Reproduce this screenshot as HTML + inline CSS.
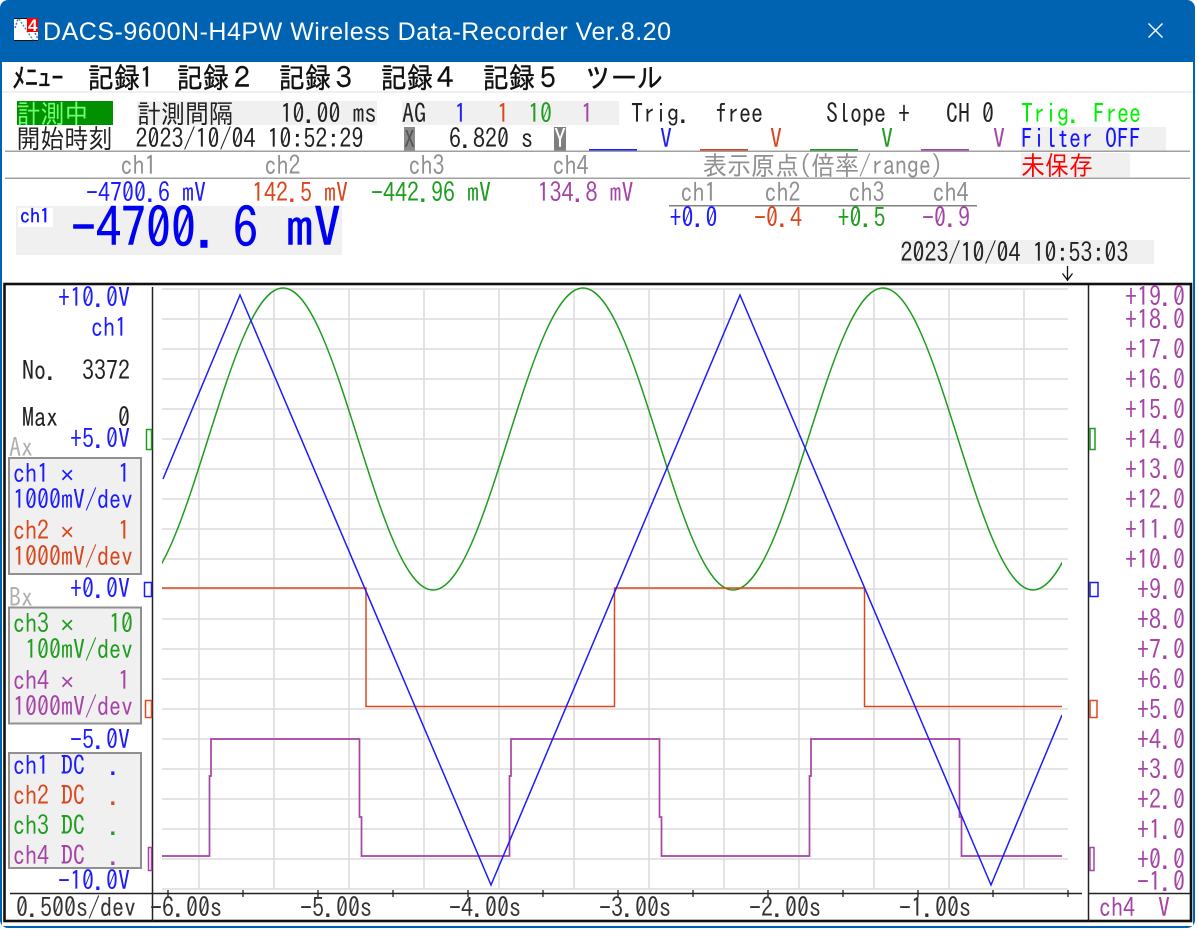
<!DOCTYPE html>
<html><head><meta charset="utf-8"><style>
html,body{margin:0;padding:0;background:#fff;width:1198px;height:930px;overflow:hidden}
svg{display:block}
text{font-family:"IPAGothic","Liberation Mono","Noto Sans CJK JP",monospace;font-size:24px;white-space:pre;fill:#222;transform-box:fill-box;transform-origin:0 100%;transform:translateY(1.5px) scaleY(1.1)}
.b{fill:#1c1cff}.r{fill:#d8481f}.g{fill:#1f9d1f}.p{fill:#a544a5}.h{fill:#909090}.l{fill:#00f000}
.m{font-size:26px;fill:#111;stroke:#111;stroke-width:.35px}
.t{transform:none}
.xx{font-family:"Liberation Mono",monospace;transform:translateY(1px)}
</style></head><body>
<svg width="1198" height="930" viewBox="0 0 1198 930" xmlns="http://www.w3.org/2000/svg">
<defs><clipPath id="c"><rect x="162" y="280" width="900" height="620"/></clipPath></defs>
<!-- window -->
<path d="M8,0H1187a8,8 0 0 1 8,8V920a8,8 0 0 1 -8,8H8a8,8 0 0 1 -8,-8V8a8,8 0 0 1 8,-8z" fill="#0063b1"/>
<rect x="2" y="62" width="1191" height="864" fill="#fff"/>
<!-- icon -->
<rect x="14" y="18" width="24" height="23" fill="#fff"/>
<rect x="14" y="18" width="24" height="1" fill="#111"/>
<rect x="14" y="40" width="24" height="1" fill="#111"/>
<path d="M19,19L33,40" stroke="#40a8a0" stroke-width="1.5" stroke-dasharray="2 1.5" fill="none"/>
<path d="M15,28L18,19M35,33L38,39" stroke="#6060e0" stroke-width="1.5" stroke-dasharray="2 1.5" fill="none"/>
<rect x="27" y="18" width="11" height="14" fill="#f00"/>
<text class="t" x="28" y="31" style="font-size:17px;font-weight:bold;fill:#fff;font-family:'Liberation Sans',sans-serif">4</text>
<text class="t" x="43" y="40" textLength="628" lengthAdjust="spacing" style="font-family:'Liberation Sans',sans-serif;font-size:25px;fill:#fff">DACS-9600N-H4PW Wireless Data-Recorder Ver.8.20</text>
<path d="M1148.5,23.5L1162.5,37.5M1162.5,23.5L1148.5,37.5" stroke="#fff" stroke-width="1.4" fill="none"/>
<!-- menu -->
<text class="m" x="12" y="87">ﾒﾆｭｰ</text>
<text class="m" x="88" y="87">記録1</text>
<text class="m" x="177" y="87">記録２</text>
<text class="m" x="279" y="87">記録３</text>
<text class="m" x="381" y="87">記録４</text>
<text class="m" x="483" y="87">記録５</text>
<text class="m" x="585" y="87">ツール</text>
<rect x="2" y="91" width="1191" height="2" fill="#f0f0f0"/>
<!-- boxes -->
<rect x="17" y="101" width="96" height="24" fill="#009000"/>
<rect x="137" y="101" width="240" height="24" fill="#f0f0f0"/>
<rect x="402" y="101" width="217" height="24" fill="#f0f0f0"/>
<rect x="1021" y="127" width="145" height="24" fill="#f0f0f0"/>
<rect x="1021" y="153" width="109" height="24" fill="#f0f0f0"/>
<rect x="16" y="206" width="326" height="49" fill="#f0f0f0"/>
<rect x="18" y="208" width="35" height="19" fill="#fff"/>
<rect x="901" y="240" width="253" height="24" fill="#f0f0f0"/>
<!-- row 1 -->
<text x="16.5" y="122" style="fill:#70ff70">計測中</text>
<text x="137" y="122">計測間隔</text>
<text x="280.5" y="122">10.00 ms</text>
<text x="402" y="122">AG</text>
<text class="b" x="454.5" y="122">1</text>
<text class="r" x="497" y="122">1</text>
<text class="g" x="528" y="122">10</text>
<text class="p" x="581" y="122">1</text>
<text x="631" y="122">Trig.</text>
<text x="715" y="122">free</text>
<text x="826" y="122">Slope +</text>
<text x="946" y="122">CH 0</text>
<text class="l" x="1021" y="122">Trig. Free</text>
<!-- row 2 -->
<text x="16.5" y="147">開始時刻</text>
<text x="135.5" y="147">2023/10/04 10:52:29</text>
<rect x="404" y="127" width="11" height="24" fill="#8a8a8a"/>
<text x="404" y="147" style="fill:#555;font-size:22px">X</text>
<text x="449" y="147">6.820 s</text>
<rect x="554" y="127" width="12" height="24" fill="#808080"/>
<text x="554" y="147" style="fill:#fff">Y</text>
<rect x="589" y="149" width="48" height="2" fill="#1c1cff"/>
<rect x="700" y="149" width="48" height="2" fill="#d8481f"/>
<rect x="810" y="149" width="48" height="2" fill="#1f9d1f"/>
<rect x="921" y="149" width="48" height="2" fill="#a544a5"/>
<text class="b" x="660" y="147">V</text>
<text class="r" x="770" y="147">V</text>
<text class="g" x="881" y="147">V</text>
<text class="p" x="993" y="147">V</text>
<text x="1021" y="147" style="fill:#1414ff">Filter OFF</text>
<rect x="5" y="150.5" width="1185" height="1.5" fill="#a0a0a0"/>
<rect x="5" y="177.5" width="1185" height="1.5" fill="#a0a0a0"/>
<!-- row 3 -->
<text class="h" x="120.5" y="174">ch1</text>
<text class="h" x="264.5" y="174">ch2</text>
<text class="h" x="408.5" y="174">ch3</text>
<text class="h" x="552.5" y="174">ch4</text>
<text class="h" x="703" y="174">表示原点(倍率/range)</text>
<text x="1021" y="174" style="fill:#f00">未保存</text>
<!-- row 4 -->
<text class="b" x="86" y="201">-4700.6 mV</text>
<text class="r" x="252" y="201">142.5 mV</text>
<text class="g" x="371" y="201">-442.96 mV</text>
<text class="p" x="537.5" y="201">134.8 mV</text>
<text class="h" x="680.5" y="201">ch1</text>
<text class="h" x="764.5" y="201">ch2</text>
<text class="h" x="848.5" y="201">ch3</text>
<text class="h" x="932.5" y="201">ch4</text>
<rect x="669" y="205" width="308" height="1.5" fill="#808080"/>
<text class="b" x="669.5" y="226">+0.0</text>
<text class="r" x="754" y="226">-0.4</text>
<text class="g" x="837.5" y="226">+0.5</text>
<text class="p" x="922" y="226">-0.9</text>
<!-- big -->
<text x="20" y="222" textLength="30" lengthAdjust="spacingAndGlyphs" style="font-size:18px;fill:#1414ff;stroke:#1414ff;stroke-width:.3px">ch1</text>
<text x="71" y="246.5" style="font-size:50px;fill:#0000f0;stroke:#0000f0;stroke-width:.5px">-4700.</text>
<text x="233" y="246.5" style="font-size:50px;fill:#0000f0;stroke:#0000f0;stroke-width:.5px">6</text>
<text x="286" y="246.5" textLength="55" lengthAdjust="spacingAndGlyphs" style="font-size:50px;fill:#0000f0;stroke:#0000f0;stroke-width:.5px">mV</text>
<text x="900.5" y="261">2023/10/04 10:53:03</text>
<path d="M1067.5,266V281M1062.5,273.5L1067.5,280L1072.5,273.5" stroke="#111" stroke-width="1.3" fill="none"/>
<!-- frame -->
<rect x="4.5" y="284" width="1186.5" height="637" fill="#fff" stroke="#111" stroke-width="2.6"/>
<!-- grid -->
<path d="M162,289H1068M162,319H1068M162,349H1068M162,379H1068M162,409H1068M162,439H1068M162,469H1068M162,499H1068M162,529H1068M162,559H1068M162,589H1068M162,619H1068M162,649H1068M162,679H1068M162,709H1068M162,739H1068M162,769H1068M162,799H1068M162,829H1068M162,859H1068M162,889H1068" stroke="#dcdcdc" stroke-width="1.6" fill="none"/>
<path d="M199,289V889M274,289V889M349,289V889M424,289V889M499,289V889M574,289V889M649,289V889M724,289V889M799,289V889M874,289V889M949,289V889M1024,289V889" stroke="#dcdcdc" stroke-width="1.6" fill="none"/>
<!-- axes -->
<path d="M152.5,287V921M1088.5,285V921" stroke="#222" stroke-width="1.5" fill="none"/>
<path d="M10,893.5H1082M1089,893.5H1190" stroke="#222" stroke-width="1.4" fill="none"/>
<path d="M168,890V897M243,890V897M318,890V897M393,890V897M468,890V897M543,890V897M618,890V897M693,890V897M768,890V897M843,890V897M918,890V897M993,890V897M1068,890V897" stroke="#222" stroke-width="1.3" fill="none"/>
<!-- waveforms -->
<g clip-path="url(#c)" fill="none" stroke-width="1.5">
<path stroke="#1f9d1f" d="M133,590c27.14,0 50.54,-73.64 75,-151c24.46,-77.36 47.86,-151 75,-151c27.14,0 50.54,73.64 75,151c24.46,77.36 47.86,151 75,151c27.14,0 50.54,-73.64 75,-151c24.46,-77.36 47.86,-151 75,-151c27.14,0 50.54,73.64 75,151c24.46,77.36 47.86,151 75,151c27.14,0 50.54,-73.64 75,-151c24.46,-77.36 47.86,-151 75,-151c27.14,0 50.54,73.64 75,151c24.46,77.36 47.86,151 75,151c27.14,0 50.54,-73.64 75,-151"/>
<path stroke="#d8481f" d="M162,588H366V706.5H614.5V588H864.5V706.5H1062"/>
<path stroke="#a544a5" stroke-width="1.7" d="M162,856H209.5V776H211V739H359.5V817H361.5V856H509.5V776H511V739H659.5V817H661.5V856H809.5V776H811V739H959.5V817H961.5V856H1062"/>
<path stroke="#1c1cff" d="M163,479L240,295L491,885L740,295L991,885L1062,715"/>
</g>
<!-- left panel -->
<text class="b" x="58" y="306">+10.0V</text>
<text class="b" x="91" y="336">ch1</text>
<text x="22" y="379">No.</text>
<text x="82" y="379">3372</text>
<text x="22" y="426">Max</text>
<text x="118" y="426">0</text>
<text class="b" x="70" y="447">+5.0V</text>
<text class="h" x="9" y="456" style="fill:#b0b0b0">Ax</text>
<rect x="9" y="458" width="132" height="116" fill="#f0f0f0" stroke="#909090" stroke-width="2"/>
<text class="b" x="13" y="482">ch1</text><text class="b xx" x="60" y="482">×</text><text class="b" x="118" y="482">1</text>
<text class="b" x="13" y="508">1000mV/dev</text>
<text class="r" x="13" y="539">ch2</text><text class="r xx" x="60" y="539">×</text><text class="r" x="118" y="539">1</text>
<text class="r" x="13" y="565">1000mV/dev</text>
<text class="b" x="70" y="597">+0.0V</text>
<text class="h" x="9" y="606" style="fill:#b0b0b0">Bx</text>
<rect x="9" y="607.5" width="132" height="116" fill="#f0f0f0" stroke="#909090" stroke-width="2"/>
<text class="g" x="13" y="632">ch3</text><text class="g xx" x="60" y="632">×</text><text class="g" x="109" y="632">10</text>
<text class="g" x="25" y="658">100mV/dev</text>
<text class="p" x="13" y="689">ch4</text><text class="p xx" x="60" y="689">×</text><text class="p" x="118" y="689">1</text>
<text class="p" x="13" y="715">1000mV/dev</text>
<text class="b" x="70" y="748">-5.0V</text>
<rect x="9" y="753" width="132" height="115" fill="#f0f0f0" stroke="#909090" stroke-width="2"/>
<text class="b" x="13" y="774">ch1 DC</text><text class="b" x="109" y="774">.</text>
<text class="r" x="13" y="804">ch2 DC</text><text class="r" x="109" y="804">.</text>
<text class="g" x="13" y="834">ch3 DC</text><text class="g" x="109" y="834">.</text>
<text class="p" x="13" y="864">ch4 DC</text><text class="p" x="109" y="864">.</text>
<text class="b" x="58" y="889">-10.0V</text>
<text x="16" y="916" style="fill:#333">0.500s/dev</text>
<text x="150" y="916" style="fill:#333">-6.00s</text>
<text x="300" y="916" style="fill:#333">-5.00s</text>
<text x="449" y="916" style="fill:#333">-4.00s</text>
<text x="599" y="916" style="fill:#333">-3.00s</text>
<text x="749" y="916" style="fill:#333">-2.00s</text>
<text x="899" y="916" style="fill:#333">-1.00s</text>
<!-- markers -->
<g fill="#fff" stroke-width="1.5">
<rect x="146.5" y="429.5" width="5" height="20" stroke="#1f9d1f"/>
<rect x="144.5" y="582.5" width="7" height="14" stroke="#1c1cff"/>
<rect x="145.5" y="700.5" width="6" height="17" stroke="#e0481f"/>
<rect x="148.5" y="847.5" width="3" height="23" stroke="#a544a5"/>
<rect x="1090" y="428.5" width="5" height="21" stroke="#1f9d1f"/>
<rect x="1090" y="582.5" width="8" height="14" stroke="#1c1cff"/>
<rect x="1090" y="700.5" width="7" height="17" stroke="#e0481f"/>
<rect x="1090" y="847.5" width="4" height="23" stroke="#a544a5"/>
</g>
<!-- right scale -->
<text class="p" x="1125" y="305">+19.0</text>
<text class="p" x="1125" y="328">+18.0</text>
<text class="p" x="1125" y="358">+17.0</text>
<text class="p" x="1125" y="388">+16.0</text>
<text class="p" x="1125" y="418">+15.0</text>
<text class="p" x="1125" y="448">+14.0</text>
<text class="p" x="1125" y="478">+13.0</text>
<text class="p" x="1125" y="508">+12.0</text>
<text class="p" x="1125" y="538">+11.0</text>
<text class="p" x="1125" y="568">+10.0</text>
<text class="p" x="1137" y="598">+9.0</text>
<text class="p" x="1137" y="628">+8.0</text>
<text class="p" x="1137" y="658">+7.0</text>
<text class="p" x="1137" y="688">+6.0</text>
<text class="p" x="1137" y="718">+5.0</text>
<text class="p" x="1137" y="748">+4.0</text>
<text class="p" x="1137" y="778">+3.0</text>
<text class="p" x="1137" y="808">+2.0</text>
<text class="p" x="1137" y="838">+1.0</text>
<text class="p" x="1137" y="868">+0.0</text>
<text class="p" x="1137" y="890">-1.0</text>
<text class="p" x="1099" y="916">ch4</text>
<text class="p" x="1158" y="916">V</text>
</svg>
</body></html>
